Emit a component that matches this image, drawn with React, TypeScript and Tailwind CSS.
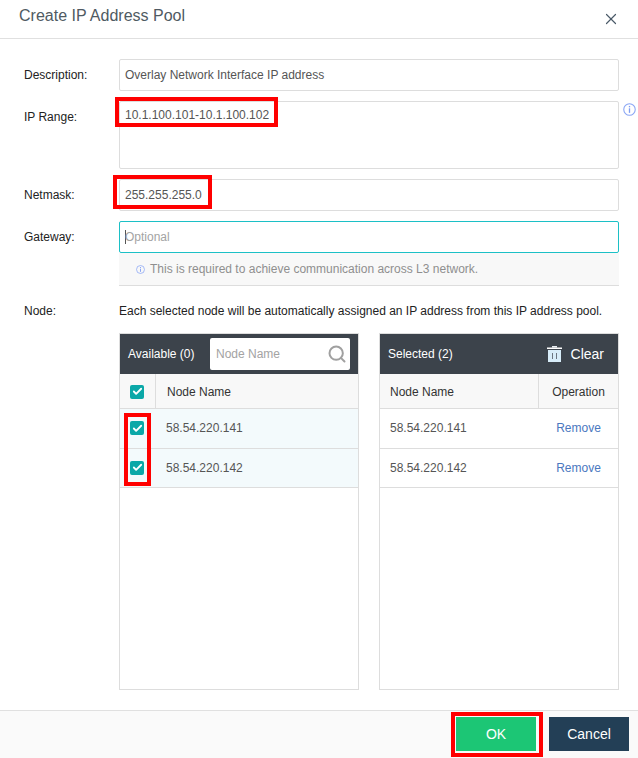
import { Check, Search, X } from "lucide-react";

function Highlight({ className }: { className: string }) {
  return <div className={`pointer-events-none absolute border-[4px] border-[#ff0000] ${className}`} />;
}

function InfoIcon({ className }: { className: string }) {
  return (
    <svg viewBox="0 0 12 12" className={className} fill="none">
      <circle cx="6" cy="6" r="5.3" stroke="#8aa6f5" strokeWidth="1" />
      <rect x="5.4" y="2.7" width="1.2" height="1.3" fill="#7f9df2" />
      <rect x="5.4" y="4.9" width="1.2" height="4.2" fill="#7f9df2" />
    </svg>
  );
}

function TrashIcon() {
  return (
    <svg viewBox="0 0 15 16" className="h-[16px] w-[15px]">
      <rect x="5" y="0" width="5" height="1.5" fill="#e9eef2" />
      <rect x="0" y="1.5" width="15" height="1.5" fill="#ffffff" />
      <path d="M1 4h13v12H1z" fill="#d7ecf8" />
      <rect x="5" y="7" width="1" height="6" fill="#6b7580" />
      <rect x="9" y="7" width="1" height="6" fill="#6b7580" />
    </svg>
  );
}

function CheckBox() {
  return (
    <span className="flex h-[14px] w-[14px] items-center justify-center rounded-[2px] bg-[#0ba8a8]">
      <Check className="h-[11px] w-[11px] text-white" strokeWidth={4} />
    </span>
  );
}

function Row({ label, children, className }: { label: string; children: React.ReactNode; className?: string }) {
  return (
    <div className={`flex ${className ?? ""}`}>
      <div className="w-[95px] shrink-0 pt-[8px] text-[12px] leading-[16px] text-[#222]">{label}</div>
      <div className="w-[500px]">{children}</div>
    </div>
  );
}

const nodes = ["58.54.220.141", "58.54.220.142"];

export default function App() {
  return (
    <div className="relative flex h-[758px] w-[638px] flex-col overflow-hidden bg-white font-['Liberation_Sans',Arial,sans-serif] text-[12px]">
      <header className="flex h-[39px] shrink-0 items-start justify-between border-b border-[#e0e0e0] pl-[19px] pr-[18px]">
        <h1 className="pt-[6px] text-[16px] leading-[20px] text-[#4f5a62]">Create IP Address Pool</h1>
        <X className="mt-[10px] h-[18px] w-[18px] text-[#4a5a68]" strokeWidth={1.6} />
      </header>

      <div className="flex-1 pl-[24px] pt-[20px]">
        <Row label="Description:">
          <div className="flex h-[32px] items-center rounded-[2px] border border-[#ddd] pl-[5px] leading-[16px] text-[#555]">
            Overlay Network Interface IP address
          </div>
        </Row>
        <Row label="IP Range:" className="relative mt-[10px]">
          <div className="h-[68px] rounded-[2px] border border-[#ddd] pl-[5px] pt-[5px] leading-[16px] text-[#555]">
            10.1.100.101-10.1.100.102
          </div>
          <InfoIcon className="absolute left-[599px] top-[2px] h-[13px] w-[13px]" />
        </Row>
        <Row label="Netmask:" className="mt-[10px]">
          <div className="flex h-[32px] items-center rounded-[2px] border border-[#ddd] pl-[5px] leading-[16px] text-[#555]">
            255.255.255.0
          </div>
        </Row>
        <Row label="Gateway:" className="mt-[10px]">
          <div className="flex h-[32px] items-center rounded-[2px] border border-[#1cc0c6] pl-[5px] leading-[16px] text-[#a3a3a3]">
            <span className="mr-[-1px] h-[14px] w-px bg-[#555]" />
            Optional
          </div>
          <div className="flex h-[33px] items-center gap-[5px] border-b border-[#ddd] bg-[#f8f8f8] pl-[17px] text-[#8f8f8f]">
            <InfoIcon className="h-[9px] w-[9px]" />
            This is required to achieve communication across L3 network.
          </div>
        </Row>

        <div className="mt-[17px] flex">
          <div className="w-[95px] shrink-0 leading-[16px] text-[#222]">Node:</div>
          <div className="w-[500px] leading-[16px] text-[#222]">
            Each selected node will be automatically assigned an IP address from this IP address pool.
          </div>
        </div>

        <div className="ml-[95px] mt-[14px] flex w-[500px] justify-between">
          <section className="flex h-[357px] w-[240px] flex-col border border-[#ddd]">
            <div className="flex h-[40px] shrink-0 items-center bg-[#3c434b] pl-[8px] text-white">
              <span className="w-[82px]">Available (0)</span>
              <div className="flex h-[32px] w-[140px] items-center justify-between rounded-[2px] bg-white pl-[6px] pr-[3px] text-[#a3a3a3]">
                Node Name
                <Search className="h-[20px] w-[20px] text-[#a0a0a0]" strokeWidth={2.4} />
              </div>
            </div>
            <div className="flex h-[35px] shrink-0 border-b border-[#ddd] bg-[#f8f8f8] text-[#333]">
              <div className="flex w-[36px] items-center border-r border-[#ddd] pl-[10px] pt-[1px]">
                <CheckBox />
              </div>
              <div className="flex items-center pl-[11px] pt-[1px]">Node Name</div>
            </div>
            {nodes.map((n, i) => (
              <div
                key={n}
                className={`flex shrink-0 items-center border-b border-[#ddd] bg-[#f3fafc] pb-[1px] pl-[10px] text-[#555] ${i === 0 ? "h-[40px]" : "h-[39px]"}`}
              >
                <CheckBox />
                <span className="ml-[22px]">{n}</span>
              </div>
            ))}
          </section>

          <section className="flex h-[357px] w-[240px] flex-col border border-[#ddd]">
            <div className="flex h-[40px] shrink-0 items-center justify-between bg-[#3c434b] pl-[8px] pr-[14px] text-white">
              <span>Selected (2)</span>
              <span className="flex items-center gap-[9px] text-[14px]">
                <TrashIcon />
                Clear
              </span>
            </div>
            <div className="flex h-[35px] shrink-0 border-b border-[#ddd] bg-[#f8f8f8] text-[#333]">
              <div className="flex w-[159px] items-center border-r border-[#ddd] pl-[10px] pt-[1px]">Node Name</div>
              <div className="flex flex-1 items-center justify-center pt-[1px]">Operation</div>
            </div>
            {nodes.map((n, i) => (
              <div
                key={n}
                className={`flex shrink-0 items-center border-b border-[#ddd] pb-[1px] text-[#555] ${i === 0 ? "h-[40px]" : "h-[39px]"}`}
              >
                <span className="w-[159px] pl-[10px]">{n}</span>
                <a className="flex-1 text-center text-[#4a78c0]">Remove</a>
              </div>
            ))}
          </section>
        </div>
      </div>

      <footer className="flex h-[48px] shrink-0 items-start justify-end gap-[13px] border-t border-[#e0e0e0] bg-[#fafafa] pr-[9px] pt-[6px] text-[14px] text-white">
        <button className="h-[34px] w-[80px] bg-[#1cc675]">OK</button>
        <button className="h-[34px] w-[80px] bg-[#233f56]">Cancel</button>
      </footer>

      <Highlight className="left-[115px] top-[97px] h-[30px] w-[163px]" />
      <Highlight className="left-[113px] top-[175px] h-[34px] w-[99px]" />
      <Highlight className="left-[124px] top-[413px] h-[73px] w-[27px]" />
      <Highlight className="left-[451px] top-[712px] h-[45px] w-[92px]" />
    </div>
  );
}
